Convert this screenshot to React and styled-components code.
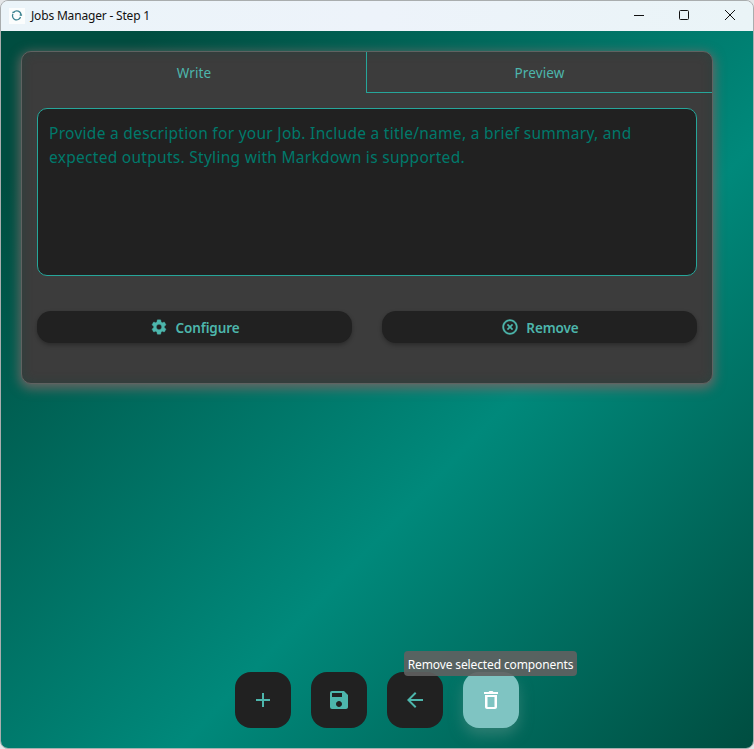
import React from "react";
import styled, { createGlobalStyle, css } from "styled-components";
import {
  MdAdd,
  MdSave,
  MdArrowBack,
  MdSettings,
  MdHighlightOff,
} from "react-icons/md";

const GlobalStyle = createGlobalStyle`
  * { box-sizing: border-box; }
  html, body { margin: 0; overflow: hidden; background: #e4e6e8; }
  body { font-family: "Noto Sans", "Open Sans", sans-serif; }
  button, textarea { font-family: inherit; margin: 0; }
`;

const Window = styled.div`
  width: 754px;
  height: 749px;
  display: flex;
  flex-direction: column;
  border: 1px solid #a9adae;
  border-radius: 8px;
  overflow: hidden;
`;

const TitleBar = styled.header`
  height: 30px;
  flex: none;
  display: flex;
  align-items: center;
  padding: 0 1px 0 8px;
  background: linear-gradient(90deg, #ebf4f9, #edf3fa 50%, #eaf4f7);
`;

const AppIcon = styled.span`
  width: 16px;
  height: 16px;
  display: flex;
  background: #fbfdfd;
`;

const WindowTitle = styled.h1`
  flex: 1;
  margin: 0 0 0 6px;
  font-size: 12px;
  font-weight: 400;
  line-height: 16px;
  letter-spacing: -0.18px;
  color: #111;
`;

const WindowButton = styled.button`
  width: 45px;
  height: 30px;
  display: flex;
  align-items: center;
  justify-content: center;
  padding: 0 1px 2px 0;
  border: 0;
  background: none;
  &:last-child { padding-right: 0; }
`;

const Page = styled.main`
  flex: 1;
  display: flex;
  flex-direction: column;
  justify-content: space-between;
  align-items: center;
  padding: 20px 40px 20px 20px;
  background: linear-gradient(133.6deg, #004d40 10%, #00897b 60%, #004d40 100%);
`;

const Card = styled.section`
  width: 692px;
  height: 333px;
  border: 1px solid #5f6261;
  border-radius: 10px;
  background: #3c3c3c;
  overflow: hidden;
  box-shadow: 0 3px 11px 2px rgba(117, 100, 100, 0.85);
`;

const CardBody = styled.div`
  height: 100%;
  border-radius: 9px;
  box-shadow: inset 0 0 10px 1px rgba(20, 75, 66, 0.35);
`;

const Tabs = styled.div`
  display: flex;
  height: 41px;
`;

const Tab = styled.button`
  flex: none;
  width: ${(p) => (p.$active ? 344 : 346)}px;
  padding: 1px 0 0;
  border: 0 solid #26a69a;
  background: none;
  font-size: 13.5px;
  line-height: 18px;
  letter-spacing: 0.1px;
  color: #4db6ac;
  ${(p) =>
    !p.$active &&
    css`
      border-left-width: 1px;
      border-bottom-width: 1px;
      border-bottom-left-radius: 1px;
    `}
`;

const Editor = styled.textarea`
  display: block;
  width: 660px;
  height: 168px;
  margin: 15px 0 0 15px;
  padding: 12px 11px;
  border: 1px solid #26a69a;
  border-radius: 10px;
  outline: none;
  resize: none;
  background: #212121;
  font-size: 15.5px;
  line-height: 24px;
  letter-spacing: 0.285px;
  &::placeholder { color: #00796b; opacity: 1; }
`;

const Actions = styled.div`
  display: grid;
  grid-template-columns: 315px 315px;
  gap: 30px;
  margin: 35px 0 0 15px;
`;

const ActionButton = styled.button`
  height: 32px;
  display: flex;
  align-items: center;
  justify-content: center;
  gap: 7px;
  padding: 0 0 0 1px;
  border: 0;
  border-radius: 14px;
  background: #212121;
  box-shadow: 0 2px 4px rgba(0, 0, 0, 0.3);
  color: #4db6ac;
  font-size: 13.5px;
  font-weight: 600;
  letter-spacing: -0.1px;
  svg { width: 18px; height: 18px; stroke: currentColor; stroke-width: 0.5px; }
  svg path[fill="none"] { stroke: none; }
`;

const ActionLabel = styled.span`
  line-height: 18px;
  padding-top: 2px;
`;

const Toolbar = styled.nav`
  display: flex;
  gap: 20px;
  padding-left: 20px;
`;

const ToolButton = styled.button`
  position: relative;
  width: 56px;
  height: 56px;
  display: flex;
  align-items: center;
  justify-content: center;
  padding: 0;
  border: 0;
  border-radius: 16px;
  background: ${(p) => (p.$hovered ? "#7fc4c2" : "#212121")};
  color: ${(p) => (p.$hovered ? "#ffffff" : "#4db6ac")};
  box-shadow: ${(p) => (p.$hovered ? "0 7px 14px rgba(90, 145, 135, 0.5)" : "none")};
  svg { width: 24px; height: 24px; }
`;

const Tooltip = styled.span`
  position: absolute;
  left: -59px;
  bottom: 52px;
  width: 173px;
  height: 25px;
  border-radius: 4px;
  background: rgba(97, 97, 97, 0.9);
  color: #fff;
  font-size: 12px;
  line-height: 27px;
  letter-spacing: -0.12px;
  white-space: nowrap;
  text-align: center;
`;

export default function App() {
  return (
    <>
      <GlobalStyle />
      <Window>
        <TitleBar>
          <AppIcon>
            <svg width="16" height="16" viewBox="0 0 16 16" fill="none" stroke="#3b8290" strokeWidth="1.3">
              <path d="M4.6 4.4A4.2 4.2 0 0 1 12 7.2M11.5 9A4.1 4.1 0 1 1 4 5.8" />
              <path d="M10.7 7.2h2.4M3.4 4.4h2" />
            </svg>
          </AppIcon>
          <WindowTitle>Jobs Manager - Step 1</WindowTitle>
          <WindowButton aria-label="Minimize">
            <svg width="10" height="10" stroke="#111"><path d="M0 5.5h10" /></svg>
          </WindowButton>
          <WindowButton aria-label="Maximize">
            <svg width="10" height="10" fill="none" stroke="#111">
              <rect x=".5" y=".5" width="9" height="9" rx="1" />
            </svg>
          </WindowButton>
          <WindowButton aria-label="Close">
            <svg width="10" height="10" stroke="#111"><path d="M0 0l10 10M10 0L0 10" /></svg>
          </WindowButton>
        </TitleBar>
        <Page>
          <Card>
            <CardBody>
              <Tabs>
                <Tab $active>Write</Tab>
                <Tab>Preview</Tab>
              </Tabs>
              <Editor placeholder="Provide a description for your Job. Include a title/name, a brief summary, and expected outputs. Styling with Markdown is supported." />
              <Actions>
                <ActionButton>
                  <MdSettings />
                  <ActionLabel>Configure</ActionLabel>
                </ActionButton>
                <ActionButton>
                  <MdHighlightOff />
                  <ActionLabel>Remove</ActionLabel>
                </ActionButton>
              </Actions>
            </CardBody>
          </Card>
          <Toolbar>
            <ToolButton aria-label="Add"><MdAdd /></ToolButton>
            <ToolButton aria-label="Save"><MdSave /></ToolButton>
            <ToolButton aria-label="Back"><MdArrowBack /></ToolButton>
            <ToolButton $hovered aria-label="Delete">
              <svg viewBox="0 0 24 24" fill="currentColor">
                <path d="M5 4h4.5l1-1h3l1 1H19v2H5z" />
                <path fillRule="evenodd" d="M6 7h12v12c0 1.1-.9 2-2 2H8c-1.1 0-2-.9-2-2zM8.5 9v10h7V9z" />
              </svg>
              <Tooltip role="tooltip">Remove selected components</Tooltip>
            </ToolButton>
          </Toolbar>
        </Page>
      </Window>
    </>
  );
}
